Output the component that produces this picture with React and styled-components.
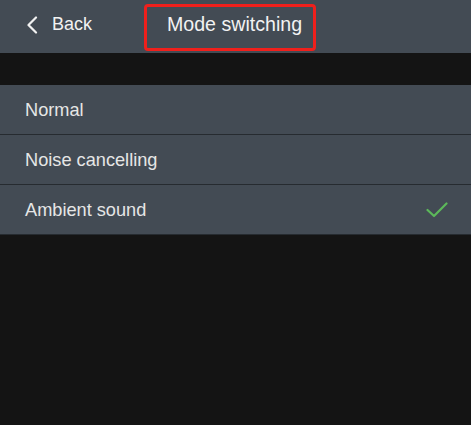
import React from "react";
import styled, { createGlobalStyle } from "styled-components";

const Global = createGlobalStyle`
  html, body { margin: 0; padding: 0; background: #141414; }
  body { font-family: "Liberation Sans", Arial, sans-serif; }
`;

const Page = styled.div`
  width: 471px;
  height: 425px;
  background: #141414;
  display: flex;
  flex-direction: column;
`;

const Header = styled.header`
  height: 53px;
  background: #434b54;
  display: flex;
  align-items: center;
  padding-left: 26px;
  box-sizing: border-box;
`;

const BackButton = styled.div`
  display: flex;
  align-items: center;
  gap: 14px;
  color: #f2f2f2;
  font-size: 18px;
  width: 118px;
  margin-top: -4px;
`;

const TitleBox = styled.div`
  width: 172px;
  height: 47px;
  box-sizing: border-box;
  border: 3px solid #f0201c;
  border-radius: 4px;
  display: flex;
  align-items: center;
  padding: 0 0 5px 20px;
  color: #f2f2f2;
  font-size: 19.6px;
  margin-top: 1px;
`;

const Spacer = styled.div`
  height: 32px;
`;

const List = styled.div`
  display: flex;
  flex-direction: column;
`;

const Row = styled.div`
  height: 50px;
  box-sizing: border-box;
  background: #434b54;
  border-bottom: 1px solid #262b30;
  display: flex;
  align-items: center;
  justify-content: space-between;
  padding: 0 23px 0 25px;
  color: #e6e6e6;
  font-size: 18.2px;
`;

const Label = styled.span`
  margin-top: 1px;
`;

const items = [
  { label: "Normal", selected: false },
  { label: "Noise cancelling", selected: false },
  { label: "Ambient sound", selected: true },
];

export default function App() {
  return (
    <Page>
      <Global />
      <Header>
        <BackButton>
          <svg width="12" height="18" viewBox="0 0 12 18">
            <path d="M10 1.5 L2.5 9 L10 16.5" fill="none" stroke="#f2f2f2" strokeWidth="2.2" strokeLinecap="round" strokeLinejoin="round" />
          </svg>
          <span>Back</span>
        </BackButton>
        <TitleBox>Mode switching</TitleBox>
      </Header>
      <Spacer />
      <List>
        {items.map((it) => (
          <Row key={it.label}>
            <Label>{it.label}</Label>
            {it.selected && (
              <svg width="22" height="16" viewBox="0 0 22 16">
                <path d="M1.5 8 L8 14 L20.5 1.5" fill="none" stroke="#5cb85a" strokeWidth="2.2" strokeLinecap="round" strokeLinejoin="round" />
              </svg>
            )}
          </Row>
        ))}
      </List>
    </Page>
  );
}
